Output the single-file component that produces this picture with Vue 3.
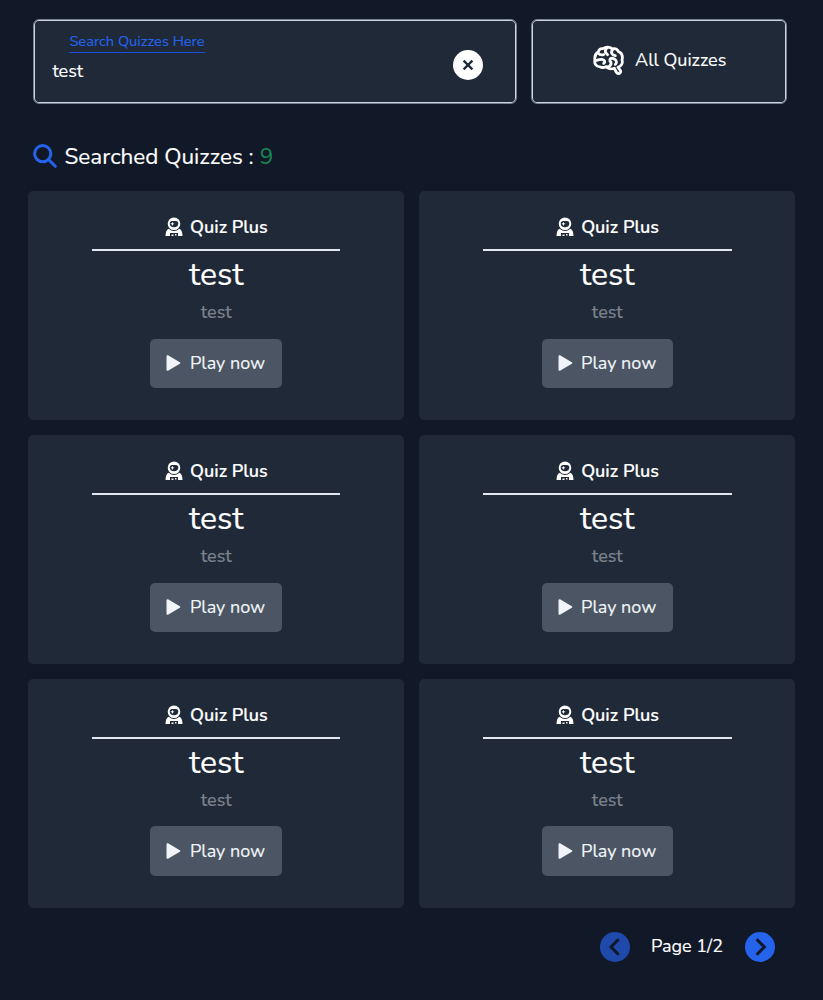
<script setup>
const quizzes = Array.from({ length: 6 }, (_, id) => ({ id, title: 'test', description: 'test' }))
</script>

<template>
  <main class="page">
    <header class="toolbar">
      <section class="panel search">
        <div class="field">
          <label class="label">Search Quizzes Here</label>
          <span class="value">test</span>
        </div>
        <button class="clear" aria-label="Clear">
          <svg viewBox="0 0 30 30"><path d="M10.6 10.6l8.800 8.800M19.4 10.6l-8.800 8.800" /></svg>
        </button>
      </section>
      <button class="panel all">
        <svg class="brain" viewBox="0 0 32 32">
          <path d="M11 3.500C8 3.500 6 5 5.500 7C2.500 9 1.500 12 2 15C1 19 3 22.500 7 22.500C10 24 12 23 13.500 22.500C16 25 19 25 22 24L24 28C26 31 30 28.500 28 26L25.800 23C29 22 31 19 30 15.500C31 11 29 8 26.500 7C25 4 22 3.500 20 4C17 1.500 13 1.700 11 3.500Z" />
          <path d="M14 3.500C11.500 6 13 8.500 15 10M5.500 8.500C7 10.500 9 10.500 11 10M2.500 16C5 16 7 14 10 15C12 15.500 13 18 11 19M20.500 4.500C17.500 8 20 10.500 23 11M13.500 22.500C18 23 20 19 17.500 16.500C17 13.500 20 13 22 14.500C25 16 24.500 19 23 20" />
        </svg>
        <span class="all-text">All Quizzes</span>
      </button>
    </header>

    <h1 class="heading">
      <svg class="lens" viewBox="0 0 24 24"><circle cx="9.700" cy="9.700" r="8.100" /><path d="M15.600 15.600l6.700 6.700" /></svg>
      <span class="heading-text">Searched Quizzes :</span>
      <span class="count">9</span>
    </h1>

    <section class="grid">
      <article v-for="quiz in quizzes" :key="quiz.id" class="card">
        <div class="brand">
          <svg class="astro" viewBox="0 0 18 20">
            <path fill-rule="evenodd" d="M9 0.500A6.300 6.300 0 1 0 9 13.100A6.300 6.300 0 1 0 9 .5ZM7.200 3.900H10.800Q13.300 3.900 13.300 6.600Q13.300 10.300 9 10.300Q4.700 10.300 4.700 6.600Q4.700 3.900 7.200 3.900Z" />
            <path fill-rule="evenodd" d="M3.600 11.700Q9 16.300 14.400 11.700Q17.500 13.200 17.500 19H.5Q.5 13.200 3.600 11.700ZM5 16V19H13V16Z" />
            <path d="M7.400 4.700L8 6.200L9.500 6.800L8 7.400L7.400 8.900L6.800 7.400L5.300 6.800L6.800 6.200ZM6.500 17.500H8.500V19H6.500ZM10 17H11.500V18.500H10Z" />
          </svg>
          <span class="brand-text">Quiz Plus</span>
        </div>
        <div class="rule"></div>
        <h2 class="title">{{ quiz.title }}</h2>
        <p class="description">{{ quiz.description }}</p>
        <button class="play">
          <svg class="triangle" viewBox="0 0 15 18"><path d="M1.500 2.200L13.300 9L1.500 15.800Z" /></svg>
          <span class="play-text">Play now</span>
        </button>
      </article>
    </section>

    <footer class="pager">
      <button class="arrow previous" aria-label="Previous"><svg viewBox="0 0 30 30"><path d="M18.700 7.200L11 15l7.700 7.800" /></svg></button>
      <span class="page-number">Page 1/2</span>
      <button class="arrow" aria-label="Next"><svg viewBox="0 0 30 30"><path d="M11.600 7.200l7.700 7.800l-7.700 7.800" /></svg></button>
    </footer>
  </main>
</template>

<style>
html, body { margin: 0; background: #111827; }
</style>

<style scoped>
* { box-sizing: border-box; }
.page { width: 823px; height: 1000px; padding: 19.400px 28px 0 28.300px; overflow: hidden; background: #111827; color: #fff; font-family: Nunito, Lato, sans-serif; font-size: 18px; -webkit-text-stroke: .15px; }
button, h1, h2, p { margin: 0; padding: 0; border: 0; color: inherit; font: inherit; }
svg { display: block; flex: none; }
span { white-space: nowrap; }
.toolbar { display: flex; gap: 13.500px; padding-left: 4.400px; height: 84px; }
.panel { display: flex; background: #1f2937; border: 1px solid #758091; box-shadow: inset 0 0 0 1px #cbd5e1; border-radius: 6px; height: 84.400px; }
.search { width: 484.500px; justify-content: space-between; padding: 12px 33.300px 0 18.700px; }
.field { display: flex; flex-direction: column; align-items: flex-start; }
.label { margin-left: 17px; height: 21px; line-height: 19px; border-bottom: 1px solid #1d4ed8; color: #2563eb; font-size: 14.630px; white-space: nowrap; }
.value { margin-top: 6px; line-height: 24px; }
.clear { width: 30px; height: 30px; margin-top: 17.400px; border-radius: 50%; background: #fff; }
.clear path { fill: none; stroke: #1f2937; stroke-width: 2.200; }
.all { width: 256px; justify-content: center; align-items: center; gap: 11.500px; padding: 0 0 3px 1.500px; }
.brain { width: 31px; height: 31px; }
.brain path { fill: none; stroke: #fff; stroke-width: 2.900; stroke-linecap: round; stroke-linejoin: round; }
.heading { display: flex; align-items: center; height: 30px; margin: 38px 0 19.800px 4.700px; font-size: 22.500px; }
.lens { width: 24px; height: 24px; margin: -1.500px 7.500px 0 0; }
.lens path, .lens circle { fill: none; stroke: #2563eb; stroke-width: 3; stroke-linecap: round; }
.count { margin-left: 6px; color: #178451; }
.grid { display: grid; grid-template-columns: 375.800px 375.800px; grid-auto-rows: 228.600px; gap: 15.300px; }
.card { display: flex; flex-direction: column; align-items: center; padding-top: 24px; background: #1f2937; border-radius: 5px; }
.brand { display: flex; align-items: center; gap: 7.500px; height: 24px; font-weight: 600; }
.astro { width: 18px; height: 20px; }
.astro path { fill: #fff; }
.rule { width: 248.500px; height: 2px; margin-top: 10.200px; background: #e2e8f0; }
.title { height: 44px; line-height: 44px; margin-top: 1.800px; font-size: 32px; }
.description { height: 24px; line-height: 24px; margin-top: 3px; color: #7b818c; font-weight: 500; }
.play { display: flex; align-items: center; gap: 8.500px; width: 131.500px; height: 49.500px; margin-top: 14.500px; padding-left: 16px; background: #4b5563; border-radius: 5px; color: #f1f5f9; }
.triangle { width: 15px; height: 18px; margin-top: -1px; }
.triangle path { fill: #f1f5f9; stroke: #f1f5f9; stroke-width: 2; stroke-linejoin: round; }
.pager { display: flex; align-items: center; justify-content: flex-end; margin-top: 24px; padding-right: 20.500px; height: 31px; }
.arrow { width: 30px; height: 30px; background: #2563eb; border-radius: 50%; }
.arrow path { fill: none; stroke: #111827; stroke-width: 3; }
.previous { background: #1f4aab; }
.page-number { width: 71px; margin: -2px 22.500px 0 21.500px; }
</style>
